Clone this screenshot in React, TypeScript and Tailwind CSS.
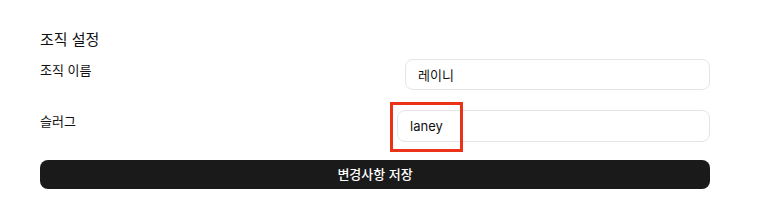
import React from 'react';

const font = { fontFamily: 'Inter, "Noto Sans CJK KR", sans-serif' };

export default function App() {
  return (
    <div className="w-[757px] h-[215px] bg-white pl-10 pr-[47px] pt-[30px]" style={font}>
      <h2 className="text-[15px] leading-[20px] font-normal text-[#111]">조직 설정</h2>

      <div className="mt-[9px] flex justify-between">
        <label className="text-[13px] leading-[20px] text-[#111] pt-[1px]">조직 이름</label>
        <input
          defaultValue="레이니"
          className="w-[305px] h-[31px] rounded-lg border border-[#e5e5e5] px-3 text-[13px] text-[#111] outline-none"
        />
      </div>

      <div className="mt-[20px] flex justify-between">
        <label className="text-[13px] leading-[20px] text-[#111] pt-[1px]">슬러그</label>
        <div className="relative">
          <input
            defaultValue="laney"
            className="w-[313px] h-[32px] rounded-lg border border-[#e5e5e5] px-3 text-[13px] text-[#111] outline-none"
          />
          {/* highlight box */}
          <div className="absolute -left-[7px] -top-[8px] w-[73px] h-[50px] border-[3.5px] border-[#ec3119] pointer-events-none" />
        </div>
      </div>

      <button className="mt-[18px] w-full h-[29px] rounded-lg bg-[#1a1a1a] text-white text-[13px] font-medium">
        변경사항 저장
      </button>
    </div>
  );
}
